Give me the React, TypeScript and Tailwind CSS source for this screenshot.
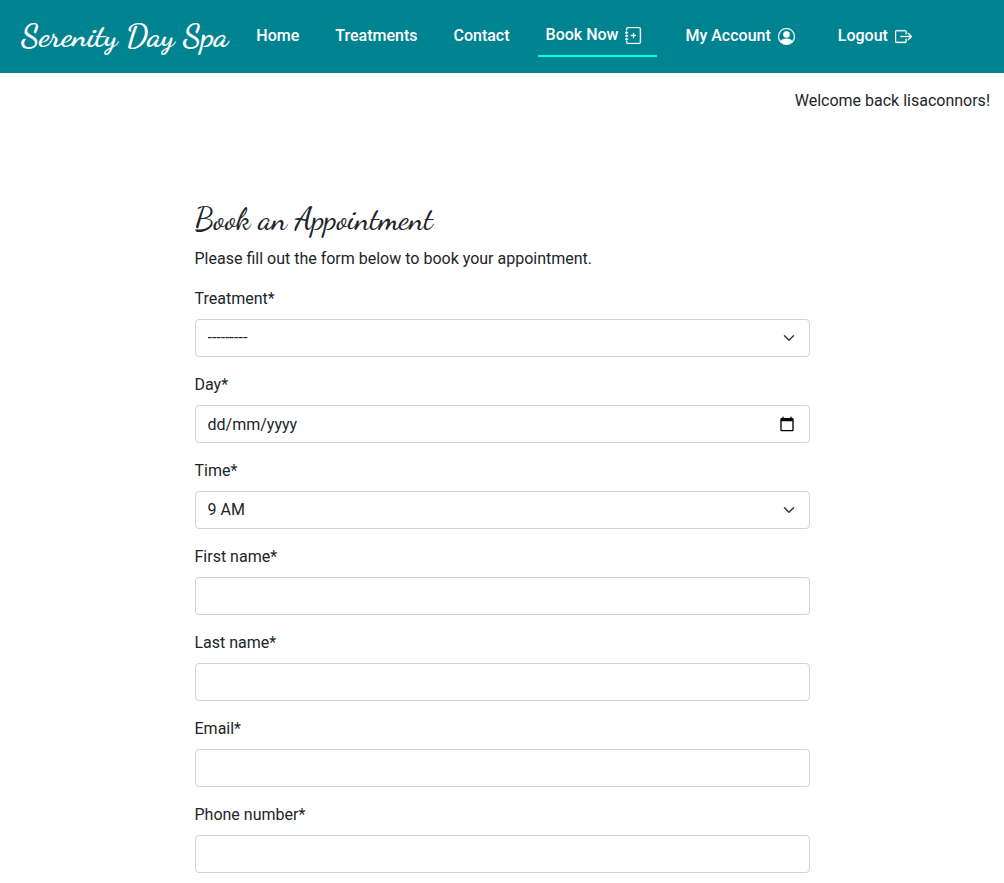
import type { ReactNode } from "react";
import { BsBoxArrowRight, BsJournalPlus, BsPersonCircle } from "react-icons/bs";

const control =
  "block h-[38px] w-full rounded border border-[#ced4da] bg-white px-3 text-base leading-6 text-[#212529] outline-none placeholder:text-[#212529] focus:border-[#86b7fe]";

const script = "font-['Dancing_Script',cursive]";

function Field({ id, label, children }: { id: string; label: string; children: ReactNode }) {
  return (
    <div className="mb-4">
      <label htmlFor={id} className="mb-2 inline-block align-top leading-6">
        {label}
      </label>
      {children}
    </div>
  );
}

function Select({ id, options }: { id: string; options: string[] }) {
  return (
    <div className="relative">
      <select id={id} className={`${control} appearance-none pr-9`}>
        {options.map((o) => (
          <option key={o}>{o}</option>
        ))}
      </select>
      <svg
        viewBox="0 0 16 16"
        className="pointer-events-none absolute top-1/2 right-[13px] h-3 w-4 -translate-y-1/2 fill-none stroke-[#343a40] stroke-2"
        strokeLinecap="round"
        strokeLinejoin="round"
        aria-hidden="true"
      >
        <path d="m2 5 6 6 6-6" />
      </svg>
    </div>
  );
}

function NavLink({ children, active = false }: { children: ReactNode; active?: boolean }) {
  return (
    <a
      href="#"
      className={`flex items-center gap-[7px] px-2 py-2 font-medium whitespace-nowrap text-white ${
        active ? "border-b-2 border-[#00ffe1]" : ""
      }`}
    >
      {children}
    </a>
  );
}

const textFields = [
  { id: "first-name", label: "First name*", type: "text" },
  { id: "last-name", label: "Last name*", type: "text" },
  { id: "email", label: "Email*", type: "email" },
  { id: "phone", label: "Phone number*", type: "tel" },
];

export default function App() {
  return (
    <div className="bg-white font-['Roboto',sans-serif] text-base leading-6 text-[#212529]">
      <header className="flex items-center bg-[#008391] px-[21px] pt-3 pb-[13px]">
        <a href="#" className={`${script} mr-5 text-[32px] leading-12 font-bold whitespace-nowrap text-white`}>
          Serenity Day Spa
        </a>
        <nav className="flex items-center gap-5">
          <NavLink>Home</NavLink>
          <NavLink>Treatments</NavLink>
          <NavLink>Contact</NavLink>
          <NavLink active>
            Book Now
            <BsJournalPlus className="mr-[7px] size-[17px] [stroke-width:0.3px]" />
          </NavLink>
          <NavLink>
            My Account
            <BsPersonCircle className="mr-[7px] size-[17px] [stroke-width:0.3px]" />
          </NavLink>
          <NavLink>
            Logout
            <BsBoxArrowRight className="size-[17px] [stroke-width:0.3px]" />
          </NavLink>
        </nav>
      </header>

      <p className="px-[14px] pt-4 text-right">Welcome back lisaconnors!</p>

      <main className="mx-auto w-full max-w-[615px] pt-[87px] pb-2">
        <h1 className={`${script} mb-[9px] text-[31px] leading-[38px] font-medium`}>Book an Appointment</h1>
        <p className="mb-4">Please fill out the form below to book your appointment.</p>
        <form>
          <Field id="treatment" label="Treatment*">
            <Select id="treatment" options={["---------"]} />
          </Field>
          <Field id="day" label="Day*">
            <div className="relative">
              <input id="day" type="text" placeholder="dd/mm/yyyy" className={control} />
              <button
                type="button"
                aria-label="Choose a day"
                className="absolute top-1/2 right-[15px] -translate-y-1/2"
              >
                <svg viewBox="0 0 24 24" className="size-4 fill-black" aria-hidden="true">
                  <path d="M20 3h-1V1h-2v2H7V1H5v2H4c-1.100 0-2 .9-2 2v16c0 1.100.9 2 2 2h16c1.100 0 2-.9 2-2V5c0-1.100-.9-2-2-2zm0 18H4V8h16v13z" />
                </svg>
              </button>
            </div>
          </Field>
          <Field id="time" label="Time*">
            <Select id="time" options={["9 AM"]} />
          </Field>
          {textFields.map((f) => (
            <Field key={f.id} id={f.id} label={f.label}>
              <input id={f.id} type={f.type} className={control} />
            </Field>
          ))}
        </form>
      </main>
    </div>
  );
}
